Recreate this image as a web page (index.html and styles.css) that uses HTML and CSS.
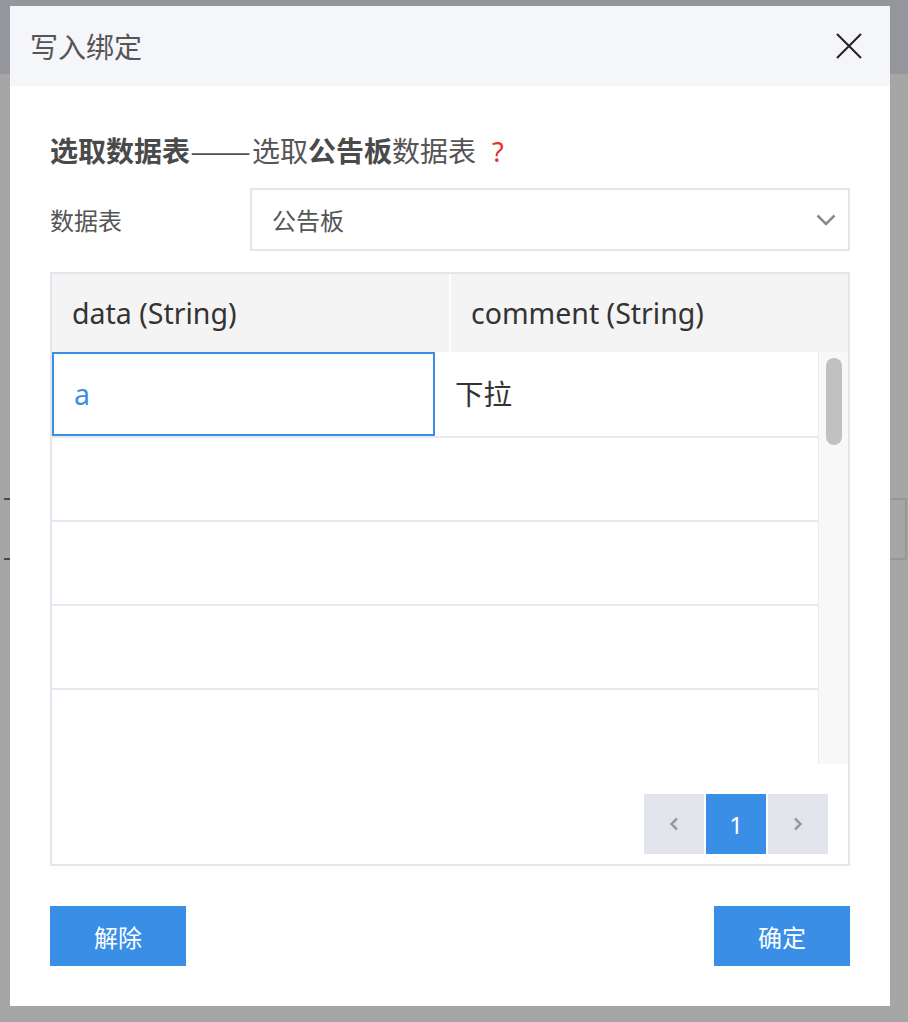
FILE: index.html
```html
<!DOCTYPE html>
<html lang="zh">
<head>
    <meta charset="UTF-8">
    <meta name="viewport" content="width=device-width, initial-scale=1.0">
    <title>写入绑定</title>
    <link rel="stylesheet" href="styles.css">
</head>
<body>
    <!-- page behind the overlay -->
    <div class="page">
        <div class="page-top"></div>
        <div class="page-row">
            <span class="page-mark"></span>
            <span class="page-box"></span>
        </div>
    </div>

    <div class="dialog">
        <div class="dialog-header">
            <span class="dialog-title">写入绑定</span>
            <svg class="close" width="26" height="26" viewBox="0 0 26 26">
                <path d="M1 1L25 25M25 1L1 25" stroke="#222" stroke-width="2" fill="none"/>
            </svg>
        </div>

        <div class="dialog-body">
            <h2 class="step"><b>选取数据表</b><span class="dash">——</span>选取<b>公告板</b>数据表<span class="help">?</span></h2>

            <div class="field">
                <label class="field-label">数据表</label>
                <div class="select">
                    <span>公告板</span>
                    <svg width="20" height="12" viewBox="0 0 20 12">
                        <path d="M1.5 1.5L10 10L18.5 1.5" stroke="#8a8a8a" stroke-width="2.5" fill="none"/>
                    </svg>
                </div>
            </div>

            <div class="grid">
                <div class="grid-head">
                    <div class="cell">data (String)</div>
                    <div class="cell">comment (String)</div>
                </div>
                <div class="grid-main">
                    <div class="grid-body" id="rows">
                        <div class="row">
                            <div class="cell active">a</div>
                            <div class="cell">下拉</div>
                        </div>
                    </div>
                    <div class="scrollbar"><div class="thumb"></div></div>
                </div>
                <div class="pager">
                    <button class="page-btn">
                        <svg width="10" height="14" viewBox="0 0 10 14"><path d="M8 1.5L2.5 7L8 12.5" stroke="#999" stroke-width="2.5" fill="none"/></svg>
                    </button>
                    <button class="page-btn current">1</button>
                    <button class="page-btn">
                        <svg width="10" height="14" viewBox="0 0 10 14"><path d="M2 1.5L7.5 7L2 12.5" stroke="#999" stroke-width="2.5" fill="none"/></svg>
                    </button>
                </div>
            </div>

            <div class="actions">
                <button class="btn">解除</button>
                <button class="btn">确定</button>
            </div>
        </div>
    </div>

    <script>
        // fill the empty rows of the grid
        const rows = document.getElementById("rows");
        for (let i = 0; i < 5; i++) {
            const row = document.createElement("div");
            row.className = "row";
            row.innerHTML = '<div class="cell"></div><div class="cell"></div>';
            rows.appendChild(row);
        }
    </script>
</body>
</html>
```

FILE: styles.css
```css
body {
    margin: 0;
    background: #a6a6a6;
    font-family: "Noto Sans", "Noto Sans CJK SC", sans-serif;
    color: #333;
}
.page-top {
    height: 74px;
    background: #95969b;
}
.page-row {
    margin-top: 424px;
    height: 62px;
    display: flex;
    justify-content: space-between;
}
.page-mark {
    width: 6px;
    margin-left: 4px;
    border-top: 2px solid #4a4a4a;
    border-bottom: 2px solid #4a4a4a;
    box-sizing: border-box;
}
.page-box {
    width: 20px;
    margin-right: 1px;
    border: 2px solid #979797;
    border-left: none;
    box-sizing: border-box;
}
.dialog {
    position: absolute;
    top: 6px;
    left: 10px;
    width: 880px;
    background: #fff;
}
.dialog-header {
    height: 80px;
    background: #f5f6fa;
    display: flex;
    align-items: center;
    justify-content: space-between;
    padding: 0 28px 0 20px;
}
.dialog-title {
    font-family: "Noto Sans CJK SC", sans-serif;
    font-size: 28px;
    color: #555;
}
.dialog-body {
    padding: 44px 40px 40px;
}
.step {
    margin: 0;
    height: 40px;
    font-family: "Noto Sans CJK SC", sans-serif;
    font-size: 28px;
    line-height: 40px;
    font-weight: normal;
    color: #555;
}
.step b {
    color: #4a4a4a;
}
.dash {
    display: inline-block;
    width: 62px;
    transform: scaleX(1.3);
    transform-origin: left;
}
.help {
    margin-left: 16px;
    color: #e5302b;
    font-family: "Noto Sans", sans-serif;
    font-size: 27px;
}
.field {
    display: flex;
    align-items: center;
    margin-top: 18px;
}
.field-label {
    width: 200px;
    font-size: 24px;
    color: #555;
}
.select {
    flex: 1;
    height: 63px;
    box-sizing: border-box;
    border: 2px solid #e3e6ec;
    display: flex;
    align-items: center;
    justify-content: space-between;
    padding: 0 12px 0 20px;
    font-size: 24px;
    color: #555;
}
.grid {
    margin-top: 21px;
    border: 2px solid #e3e6ec;
}
.grid-head {
    display: grid;
    grid-template-columns: 1fr 1fr;
    column-gap: 2px;
    background: #fff;
}
.grid-head .cell {
    background: #f4f4f4;
    height: 78px;
    line-height: 78px;
}
.cell {
    padding: 0 20px;
    font-size: 28.5px;
    color: #333;
    box-sizing: border-box;
}
.grid-main {
    display: flex;
    height: 412px;
}
.grid-body {
    flex: 1;
    overflow: hidden;
}
.scrollbar {
    width: 30px;
    box-sizing: border-box;
    background: #f8f8f8;
    border-left: 1px solid #ececec;
    padding: 6px 6px 0 7px;
}
.thumb {
    height: 87px;
    background: #c1c1c1;
    border-radius: 8px;
}
.row {
    display: grid;
    grid-template-columns: 1fr 1fr;
    height: 86px;
    border-bottom: 2px solid #e6e9ef;
    box-sizing: border-box;
}
.row + .row {
    height: 84px;
}
.row .cell {
    line-height: 84px;
}
.row .cell.active {
    border: 2px solid #3a8ee6;
    line-height: 80px;
    color: #3a8ee6;
}
.pager {
    display: flex;
    justify-content: flex-end;
    gap: 2px;
    padding: 30px 20px 10px;
}
.page-btn {
    width: 60px;
    height: 60px;
    border: none;
    padding: 0;
    background: #e1e4eb;
    display: flex;
    align-items: center;
    justify-content: center;
    font-family: "Noto Sans", sans-serif;
    font-size: 24px;
}
.page-btn.current {
    background: #3a8ee6;
    color: #fff;
}
.actions {
    display: flex;
    justify-content: space-between;
    margin-top: 40px;
}
.btn {
    width: 136px;
    height: 60px;
    border: none;
    background: #3a8ee6;
    color: #fff;
    font-family: "Noto Sans CJK SC", sans-serif;
    font-size: 24px;
}
```
